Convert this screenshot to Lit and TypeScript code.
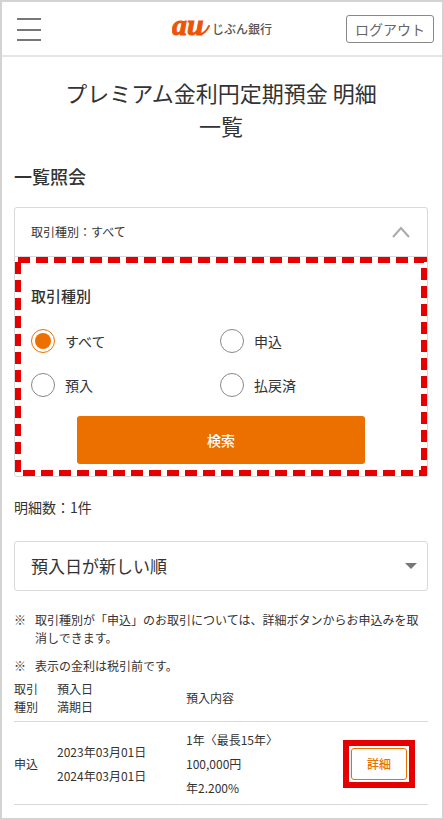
import { LitElement, html, css } from "lit";
import { customElement, state } from "lit/decorators.js";

const TYPES = ["すべて", "申込", "預入", "払戻済"];

const NOTES = [
  "取引種別が「申込」のお取引については、詳細ボタンからお申込みを取消しできます。",
  "表示の金利は税引前です。",
];

@customElement("bank-header")
export class BankHeader extends LitElement {
  static styles = css`
    :host {
      display: block;
    }
    .bar {
      display: grid;
      grid-template-columns: 1fr auto 1fr;
      align-items: center;
      height: 53px;
      padding: 0 8px;
      border-bottom: 2px solid #e6e6e6;
    }
    .menu {
      justify-self: start;
      display: flex;
      margin-left: 7px;
      padding: 0;
      border: 0;
      background: none;
    }
    .logo {
      display: flex;
      align-items: center;
      gap: 1px;
      color: #555;
      font-size: 12px;
      font-weight: 500;
      line-height: 18px;
      text-decoration: none;
    }
    .mark {
      font-family: "Liberation Serif", serif;
      font-size: 30px;
      font-weight: 700;
      font-style: italic;
      fill: #eb5505;
      stroke: #eb5505;
      stroke-width: 1px;
    }
    .logout {
      justify-self: end;
      box-sizing: border-box;
      width: 88px;
      height: 28px;
      padding: 0;
      border: 1px solid #888;
      border-radius: 3px;
      background: #fff;
      color: #666;
      font: inherit;
      font-size: 14px;
      line-height: 24px;
    }
  `;

  render() {
    return html`
      <header class="bar">
        <button class="menu" aria-label="メニュー">
          <svg width="24" height="24" viewBox="0 0 24 24" stroke="#777" stroke-width="2">
            <path d="M0 2h24M0 13h24M0 23h24" />
          </svg>
        </button>
        <a class="logo" href="#">
          <svg width="39" height="48" viewBox="0 0 39 48" aria-label="au">
            <text class="mark" x="0" y="30">au</text>
            <path d="M28 29q5 0 9-8" fill="none" stroke="#eb5505" stroke-width="2" stroke-linecap="round" />
          </svg>
          <span>じぶん銀行</span>
        </a>
        <button class="logout">ログアウト</button>
      </header>
    `;
  }
}

@customElement("search-panel")
export class SearchPanel extends LitElement {
  @state() private selected = TYPES[0];

  static styles = css`
    :host {
      display: block;
    }
    .card {
      border: 1px solid #d9d9d9;
      border-radius: 3px;
    }
    .summary {
      display: flex;
      align-items: center;
      justify-content: space-between;
      box-sizing: border-box;
      width: 100%;
      height: 49px;
      padding: 0 17px 0 16px;
      border: 0;
      border-bottom: 1px solid #d9d9d9;
      background: none;
      color: inherit;
      font: inherit;
      font-size: 12px;
      line-height: 18px;
    }
    .panel {
      position: relative;
      padding: 27px 0 12px;
    }
    .frame {
      position: absolute;
      inset: 0;
      width: 100%;
      height: 100%;
      pointer-events: none;
    }
    .frame rect {
      x: 3px;
      y: 3px;
      width: calc(100% - 6px);
      height: calc(100% - 6px);
      fill: none;
      stroke: #e60000;
      stroke-width: 6px;
      stroke-dasharray: 12 6;
    }
    .group {
      margin: 0 18px 19px 16px;
      padding: 0;
      border: 0;
    }
    .legend {
      padding: 0;
      margin-bottom: 21px;
      font-size: 15px;
      font-weight: 500;
      line-height: 24px;
    }
    .options {
      display: grid;
      grid-template-columns: 1fr 1fr;
      row-gap: 20px;
    }
    .option {
      display: flex;
      align-items: center;
      gap: 10px;
      font-size: 14px;
      line-height: 24px;
    }
    .radio {
      appearance: none;
      box-sizing: border-box;
      width: 24px;
      height: 24px;
      margin: 0;
      border: 1px solid #888;
      border-radius: 50%;
      background: #fff;
    }
    .radio:checked {
      padding: 3px;
      border-color: #eb7000;
      background: #eb7000 content-box;
    }
    .search {
      display: block;
      width: 70%;
      height: 48px;
      margin: 0 auto;
      padding: 0;
      border: 0;
      border-radius: 3px;
      background: #eb7000;
      color: #fff;
      font: inherit;
      font-size: 14px;
      font-weight: 500;
      line-height: 24px;
    }
  `;

  render() {
    return html`
      <div class="card">
        <button class="summary" aria-expanded="true">
          <span>取引種別：${this.selected}</span>
          <svg width="18" height="12" viewBox="0 0 18 12" fill="none" stroke="#aaa" stroke-width="2">
            <path d="M1 11L9 2l8 9" />
          </svg>
        </button>
        <div class="panel">
          <svg class="frame" aria-hidden="true"><rect /></svg>
          <fieldset class="group">
            <legend class="legend">取引種別</legend>
            <div class="options">
              ${TYPES.map(
                (t) => html`
                  <label class="option">
                    <input
                      class="radio"
                      type="radio"
                      name="type"
                      .checked=${t === this.selected}
                      @change=${() => (this.selected = t)}
                    />
                    <span>${t}</span>
                  </label>
                `
              )}
            </div>
          </fieldset>
          <button class="search">検索</button>
        </div>
      </div>
    `;
  }
}

@customElement("app-root")
export class AppRoot extends LitElement {
  static styles = css`
    :host {
      display: block;
      box-sizing: border-box;
      min-height: 100vh;
      border: 2px solid #d3d3d3;
      background: #fff;
      color: #333;
      font-family: "Noto Sans CJK JP", sans-serif;
      font-size: 12px;
      line-height: 18px;
    }
    .content {
      padding: 19px 14px 13px 12px;
    }
    .title {
      margin: 0 40px 21px;
      font-size: 22px;
      font-weight: 400;
      line-height: 33px;
      text-align: center;
    }
    .word {
      display: inline-block;
    }
    .heading {
      margin: 0 0 17px;
      font-size: 18px;
      font-weight: 500;
      line-height: 27px;
    }
    .count {
      margin: 20px 0 23px;
      font-size: 14px;
      line-height: 21px;
    }
    .sort {
      display: grid;
      align-items: center;
    }
    .select,
    .caret {
      grid-area: 1 / 1;
    }
    .select {
      appearance: none;
      box-sizing: border-box;
      width: 100%;
      height: 50px;
      padding: 0 16px;
      border: 1px solid #d9d9d9;
      border-radius: 3px;
      background: #fff;
      color: inherit;
      font: inherit;
      font-size: 17px;
      line-height: 26px;
    }
    .caret {
      justify-self: end;
      margin-right: 11px;
      pointer-events: none;
    }
    .notes {
      display: grid;
      gap: 10px;
      margin: 20px 0 5px;
      padding: 0;
      list-style: none;
    }
    .note {
      display: grid;
      grid-template-columns: 21px 1fr;
    }
    .table {
      width: 100%;
      border-collapse: collapse;
      table-layout: fixed;
    }
    .table th,
    .table td {
      padding: 0;
      border-bottom: 1px solid #d9d9d9;
      font-weight: 400;
      text-align: left;
      vertical-align: middle;
    }
    .table th {
      padding-bottom: 5px;
    }
    .table td {
      padding: 6px 0 4px;
      line-height: 24px;
    }
    .col-type {
      width: 43px;
    }
    .col-date {
      width: 129px;
    }
    .col-action {
      width: 85px;
    }
    .highlight {
      display: flex;
      width: 56px;
      padding: 2px;
      border: 6px solid #e60000;
    }
    .detail {
      flex: 1;
      height: 32px;
      padding: 0;
      border: 1px solid #eb7000;
      border-radius: 3px;
      background: #fff;
      color: #eb7000;
      font: inherit;
      font-weight: 500;
      line-height: 24px;
    }
  `;

  render() {
    return html`
      <bank-header></bank-header>
      <main class="content">
        <h1 class="title">プレミアム金利円定期預金 明細<span class="word">一覧</span></h1>
        <h2 class="heading">一覧照会</h2>
        <search-panel></search-panel>
        <p class="count">明細数：1件</p>
        <div class="sort">
          <select class="select" aria-label="並び順">
            <option>預入日が新しい順</option>
          </select>
          <svg class="caret" width="12" height="6" viewBox="0 0 12 6" fill="#777">
            <path d="M0 0h12L6 6z" />
          </svg>
        </div>
        <ul class="notes">
          ${NOTES.map((n) => html`<li class="note"><span>※</span><span>${n}</span></li>`)}
        </ul>
        <table class="table">
          <thead>
            <tr>
              <th class="col-type">取引<br />種別</th>
              <th class="col-date">預入日<br />満期日</th>
              <th>預入内容</th>
              <th class="col-action"></th>
            </tr>
          </thead>
          <tbody>
            <tr>
              <td>申込</td>
              <td>2023年03月01日<br />2024年03月01日</td>
              <td>1年〈最長15年〉<br />100,000円<br />年2.200%</td>
              <td>
                <div class="highlight"><button class="detail">詳細</button></div>
              </td>
            </tr>
          </tbody>
        </table>
      </main>
    `;
  }
}
